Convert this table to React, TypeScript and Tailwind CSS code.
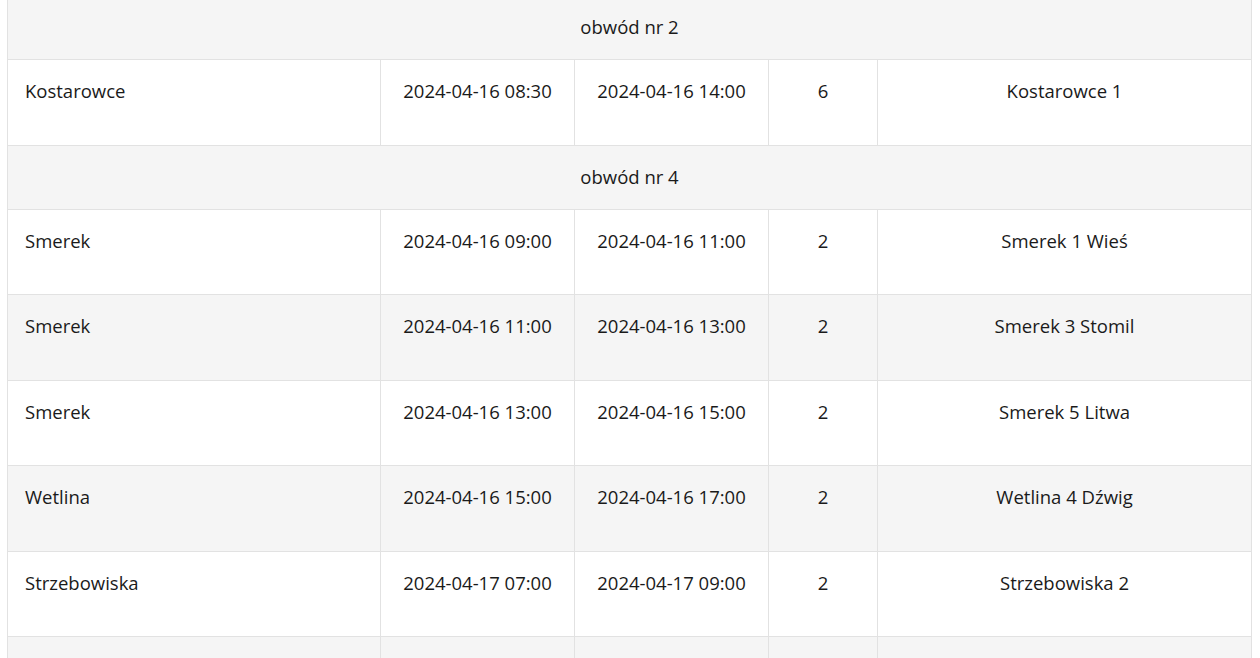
import React from 'react';

type Row = { place: string; from: string; to: string; count: string; station: string };
type Group = { name: string; rows: Row[] };

const GROUPS: Group[] = [
  {
    name: 'obwód nr 2',
    rows: [{ place: 'Kostarowce', from: '2024-04-16 08:30', to: '2024-04-16 14:00', count: '6', station: 'Kostarowce 1' }],
  },
  {
    name: 'obwód nr 4',
    rows: [
      { place: 'Smerek', from: '2024-04-16 09:00', to: '2024-04-16 11:00', count: '2', station: 'Smerek 1 Wieś' },
      { place: 'Smerek', from: '2024-04-16 11:00', to: '2024-04-16 13:00', count: '2', station: 'Smerek 3 Stomil' },
      { place: 'Smerek', from: '2024-04-16 13:00', to: '2024-04-16 15:00', count: '2', station: 'Smerek 5 Litwa' },
      { place: 'Wetlina', from: '2024-04-16 15:00', to: '2024-04-16 17:00', count: '2', station: 'Wetlina 4 Dźwig' },
      { place: 'Strzebowiska', from: '2024-04-17 07:00', to: '2024-04-17 09:00', count: '2', station: 'Strzebowiska 2' },
      { place: '', from: '', to: '', count: '', station: '' },
    ],
  },
];

const cell = 'border border-[#e2e2e2] h-[85.5px] align-top pt-[17px] text-center';

const App: React.FC = () => {
  let i = 0;
  return (
    <div className="w-[1260px] h-[658px] overflow-hidden bg-white">
      <table
        className="-mt-[5px] ml-[7px] w-[1244px] table-fixed border-collapse text-[18.5px] leading-[27px] text-[#1a1a1a]"
        style={{ fontFamily: '"Open Sans", "Liberation Sans", sans-serif' }}
      >
        <colgroup>
          <col className="w-[373px]" />
          <col className="w-[194px]" />
          <col className="w-[194px]" />
          <col className="w-[109px]" />
          <col className="w-[374px]" />
        </colgroup>
        <tbody>
          {GROUPS.map((g) => {
            const groupBg = i++ % 2 === 0 ? 'bg-[#f5f5f5]' : 'bg-white';
            return (
              <React.Fragment key={g.name}>
                <tr className={groupBg}>
                  <td colSpan={5} className="border border-[#e2e2e2] h-[64px] text-center align-top pt-[17px]">
                    {g.name}
                  </td>
                </tr>
                {g.rows.map((r, k) => {
                  const bg = i++ % 2 === 0 ? 'bg-[#f5f5f5]' : 'bg-white';
                  return (
                    <tr key={k} className={bg}>
                      <td className={`${cell} !text-left pl-[17px]`}>{r.place}</td>
                      <td className={cell}>{r.from}</td>
                      <td className={cell}>{r.to}</td>
                      <td className={cell}>{r.count}</td>
                      <td className={cell}>{r.station}</td>
                    </tr>
                  );
                })}
              </React.Fragment>
            );
          })}
        </tbody>
      </table>
    </div>
  );
};

export default App;
